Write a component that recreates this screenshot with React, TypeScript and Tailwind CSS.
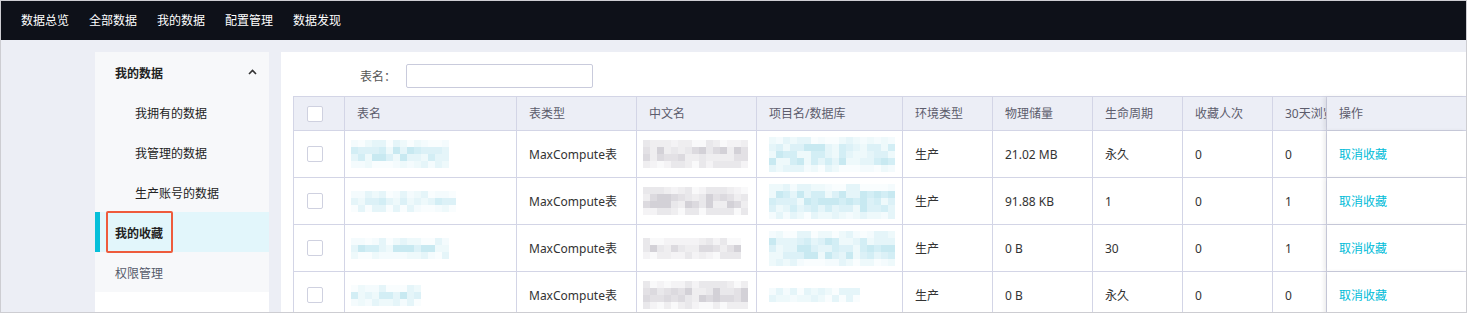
import React from "react";

const FONT = { fontFamily: '"Noto Sans", "Noto Sans CJK SC", sans-serif' };

const CYAN = ["#c8e9f1", "#d3eef5", "#dcf1f7", "#e5f5f9", "#eef9fb", "#f4fbfd", "#f9fdfe"];
const GRAY = ["#d3d1d7", "#dcdadf", "#e3e1e5", "#e9e8eb", "#efeef0", "#f4f3f5", "#f9f9fa"];

function rand(seed: number) {
  let s = seed;
  return () => {
    s = (s * 9301 + 49297) % 233280;
    return s / 233280;
  };
}

function Mosaic({ w, h, seed, tone }: { w: number; h: number; seed: number; tone: "cyan" | "gray" }) {
  const pal = tone === "cyan" ? CYAN : GRAY;
  const cell = 7;
  const cols = Math.ceil(w / cell);
  const rows = Math.ceil(h / cell);
  const r = rand(seed);
  const cells: string[] = [];
  for (let i = 0; i < cols * rows; i++) {
    const row = Math.floor(i / cols);
    const mid = row > 0 && row < rows - 1;
    const v = r();
    const idx = mid ? Math.floor(v * 5) : 3 + Math.floor(v * 4);
    cells.push(pal[Math.min(idx, pal.length - 1)]);
  }
  return (
    <div className="flex flex-wrap" style={{ width: cols * cell, height: rows * cell }}>
      {cells.map((c, i) => (
        <div key={i} className="w-[7px] h-[7px]" style={{ background: c }} />
      ))}
    </div>
  );
}

function Checkbox() {
  return <div className="w-[16px] h-[16px] rounded-[2px] border border-[#cfd1e0] bg-white" />;
}

const widths = [51, 172, 120, 120, 146, 90, 100, 90, 90, 54, 140];
const headers = ["", "表名", "表类型", "中文名", "项目名/数据库", "环境类型", "物理储量", "生命周期", "收藏人次", "30天浏览", "操作"];

const rows = [
  { n: [98, 22, 11], c: [100, 22, 21], p: [120, 30, 31], env: "生产", size: "21.02 MB", life: "永久", fav: "0", view: "0" },
  { n: [105, 16, 12], c: [100, 22, 22], p: [120, 30, 32], env: "生产", size: "91.88 KB", life: "1", fav: "0", view: "1" },
  { n: [98, 20, 13], c: [92, 20, 23], p: [120, 30, 33], env: "生产", size: "0 B", life: "30", fav: "0", view: "1" },
  { n: [70, 20, 14], c: [100, 28, 24], p: [90, 14, 34], env: "生产", size: "0 B", life: "永久", fav: "0", view: "0" },
];

export default function App() {
  const nav = ["数据总览", "全部数据", "我的数据", "配置管理", "数据发现"];
  return (
    <div className="w-[1467px] h-[313px] overflow-hidden border border-[#cdcdd2] bg-[#eceef5] text-[12px]" style={FONT}>
      <div className="h-[39px] bg-[#0e1119] flex items-center pl-[20px] gap-[20px] text-white">
        {nav.map((t) => (
          <span key={t} className="leading-none">{t}</span>
        ))}
      </div>
      <div className="flex pt-[12px] pl-[94px] h-[273px]">
        <div className="w-[174px] bg-white shrink-0">
          <div className="bg-[#f7f8fa]">
            <div className="h-[40px] flex items-center justify-between pl-[20px] pr-[12px] pt-[3px] font-bold text-[#222]">
              <span>我的数据</span>
              <svg width="9" height="6" viewBox="0 0 9 6" className="mb-[3px]">
                <polyline points="1,5 4.5,1.5 8,5" fill="none" stroke="#333" strokeWidth="1.6" />
              </svg>
            </div>
            {["我拥有的数据", "我管理的数据", "生产账号的数据"].map((t) => (
              <div key={t} className="h-[40px] flex items-center pl-[40px] pt-[3px] text-[#222]">{t}</div>
            ))}
            <div className="relative h-[40px] flex items-center pl-[20px] pt-[3px] bg-[#e2f6fb] font-bold text-[#222]">
              <div className="absolute left-0 top-0 bottom-0 w-[5px] bg-[#06bfd9]" />
              <span>我的收藏</span>
              <div className="absolute left-[11px] top-[-1px] w-[67px] h-[42px] border-2 border-[#ee5b3c] rounded-[2px]" />
            </div>
            <div className="h-[40px] flex items-center pl-[20px] pt-[3px] text-[#555a6a]">权限管理</div>
          </div>
        </div>
        <div className="ml-[12px] flex-1 bg-white">
          <div className="flex pl-[79px] pt-[12px] h-[44px]">
            <div className="flex items-center h-[24px]">
              <span className="text-[#555] w-[46px] pt-[1px]">表名：</span>
              <div className="w-[187px] h-[24px] border border-[#c9cbdc] rounded-[2px] bg-white" />
            </div>
          </div>
          <div className="ml-[12px] border-l border-t border-[#d3d5e6] w-[1173px]">
            <div className="flex h-[34px] bg-[#eceef6] border-b border-[#d3d5e6] text-[#5c5c6c]">
              {headers.map((h, i) => (
                <div
                  key={i}
                  className={`shrink-0 flex items-center border-r border-[#d3d5e6] overflow-hidden whitespace-nowrap ${i === 0 ? "pl-[13px]" : "pl-[12px]"} ${i === 10 ? "shadow-[-3px_0_4px_rgba(0,0,0,0.08)] bg-[#eceef6]" : ""}`}
                  style={{ width: widths[i] }}
                >
                  {i === 0 ? <Checkbox /> : <span className="pt-[1px]">{h}</span>}
                </div>
              ))}
            </div>
            {rows.map((r, ri) => (
              <div key={ri} className="flex h-[47px] border-b border-[#d3d5e6] text-[#333]">
                <div className="shrink-0 flex items-center pl-[13px] border-r border-[#d3d5e6]" style={{ width: widths[0] }}>
                  <Checkbox />
                </div>
                <div className="shrink-0 flex items-center pl-[6px] border-r border-[#d3d5e6]" style={{ width: widths[1] }}>
                  <Mosaic w={r.n[0]} h={r.n[1]} seed={r.n[2]} tone="cyan" />
                </div>
                <div className="shrink-0 flex items-center pl-[12px] pt-[2px] border-r border-[#d3d5e6]" style={{ width: widths[2] }}>
                  MaxCompute表
                </div>
                <div className="shrink-0 flex items-center pl-[6px] border-r border-[#d3d5e6]" style={{ width: widths[3] }}>
                  <Mosaic w={r.c[0]} h={r.c[1]} seed={r.c[2]} tone="gray" />
                </div>
                <div className="shrink-0 flex items-center pl-[12px] border-r border-[#d3d5e6]" style={{ width: widths[4] }}>
                  <Mosaic w={r.p[0]} h={r.p[1]} seed={r.p[2]} tone="cyan" />
                </div>
                <div className="shrink-0 flex items-center pl-[12px] pt-[2px] border-r border-[#d3d5e6]" style={{ width: widths[5] }}>{r.env}</div>
                <div className="shrink-0 flex items-center pl-[12px] pt-[2px] border-r border-[#d3d5e6]" style={{ width: widths[6] }}>{r.size}</div>
                <div className="shrink-0 flex items-center pl-[12px] pt-[2px] border-r border-[#d3d5e6]" style={{ width: widths[7] }}>{r.life}</div>
                <div className="shrink-0 flex items-center pl-[12px] pt-[2px] border-r border-[#d3d5e6]" style={{ width: widths[8] }}>{r.fav}</div>
                <div className="shrink-0 flex items-center pl-[12px] pt-[2px] border-r border-[#d3d5e6]" style={{ width: widths[9] }}>{r.view}</div>
                <div className="shrink-0 flex items-center pl-[12px] pt-[2px] border-r border-[#d3d5e6] bg-white text-[#00bcd8] shadow-[-3px_0_4px_rgba(0,0,0,0.08)]" style={{ width: widths[10] }}>
                  取消收藏
                </div>
              </div>
            ))}
          </div>
        </div>
      </div>
    </div>
  );
}
